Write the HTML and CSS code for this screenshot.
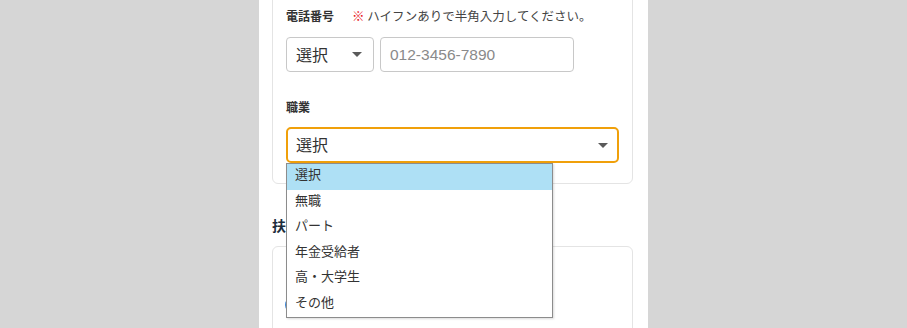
FILE: index.html
```html
<!DOCTYPE html>
<html lang="ja">
<head>
    <meta charset="UTF-8">
    <meta name="viewport" content="width=device-width, initial-scale=1.0">
    <title>お申し込みフォーム</title>
    <link rel="stylesheet" href="styles.css">
</head>
<body>
    <div class="panel">
        <div class="card">
            <div class="field-label">
                <span class="label-text">電話番号</span>
                <span class="note"><span class="mark">※</span> ハイフンありで半角入力してください。</span>
            </div>
            <div class="tel-row">
                <div class="select small">
                    <span>選択</span>
                    <span class="arrow"></span>
                </div>
                <div class="text-input">012-3456-7890</div>
            </div>

            <div class="field-label job-label">
                <span class="label-text">職業</span>
            </div>
            <div class="select-wrap">
                <div class="select wide active">
                    <span>選択</span>
                    <span class="arrow"></span>
                </div>
                <ul class="dropdown">
                    <li class="selected">選択</li>
                    <li>無職</li>
                    <li>パート</li>
                    <li>年金受給者</li>
                    <li>高・大学生</li>
                    <li>その他</li>
                </ul>
            </div>
        </div>

        <h2 class="section-title">扶養家族の有無</h2>
        <div class="card second">
            <div class="radio-row">
                <span class="radio"></span>
                <span>あり</span>
            </div>
        </div>
    </div>
</body>
</html>
```

FILE: styles.css
```css
body {
    margin: 0;
    padding: 0;
    background: #d6d6d6;
    font-family: "Noto Sans CJK JP", "Liberation Sans", sans-serif;
    color: #333;
    height: 328px;
    overflow: hidden;
}
.panel {
    width: 389px;
    height: 328px;
    margin: 0 auto;
    background: #fff;
    overflow: hidden;
}
.card {
    margin: -12px 15px 0 13px;
    border: 1px solid #e4e4e4;
    border-radius: 6px;
    padding: 20px 13px 20px 13px;
}
.field-label {
    display: flex;
    align-items: center;
    height: 14px;
    line-height: 14px;
}
.label-text {
    font-size: 12px;
    font-weight: bold;
    color: #333;
    width: 66px;
}
.note {
    font-size: 12.5px;
    color: #444;
}
.mark {
    color: #e8141c;
    font-weight: bold;
}
.tel-row {
    display: flex;
    gap: 6px;
    margin-top: 14px;
}
.select {
    box-sizing: border-box;
    display: flex;
    align-items: center;
    justify-content: space-between;
    border: 1px solid #c8c8c8;
    border-radius: 4px;
    background: #fff;
    font-size: 16px;
    color: #333;
    padding: 0 11px 2px 9px;
}
.select.small {
    width: 88px;
    height: 35px;
}
.arrow {
    width: 0;
    height: 0;
    margin-top: 2px;
    border-left: 5px solid transparent;
    border-right: 5px solid transparent;
    border-top: 5px solid #5a5a5a;
}
.text-input {
    box-sizing: border-box;
    width: 194px;
    height: 35px;
    border: 1px solid #c8c8c8;
    border-radius: 4px;
    font-family: "Liberation Sans", "Noto Sans CJK JP", sans-serif;
    font-size: 15.5px;
    color: #8a8a8a;
    padding: 0 9px;
    display: flex;
    align-items: center;
}
.job-label {
    margin-top: 28px;
}
.select-wrap {
    position: relative;
    margin-top: 13px;
}
.select.wide {
    width: 333px;
    height: 36px;
    padding: 0 9px 2px 8px;
}
.select.active {
    border: 2px solid #f0a00a;
    border-radius: 5px;
}
.dropdown {
    position: absolute;
    top: 100%;
    left: 0;
    width: 267px;
    margin: 0;
    padding: 0;
    list-style: none;
    box-sizing: border-box;
    border: 1px solid #8c8c8c;
    background: #fff;
    box-shadow: 1px 1px 2px rgba(0, 0, 0, 0.15);
    z-index: 10;
}
.dropdown li {
    height: 25.5px;
    line-height: 19.5px;
    box-sizing: border-box;
    font-size: 13px;
    padding: 0 0 6px 8px;
    color: #333;
}
.dropdown li.selected {
    background: #aee0f5;
}
.section-title {
    margin: 31px 0 11px 13px;
    font-size: 14px;
    line-height: 20px;
    font-weight: bold;
    color: #1d2d3c;
}
.card.second {
    margin-top: 0;
    height: 120px;
    padding: 48px 13px 0 12px;
}
.radio-row {
    display: flex;
    align-items: center;
    gap: 8px;
    font-size: 14px;
}
.radio {
    width: 14px;
    height: 14px;
    border: 2px solid #3a86d8;
    border-radius: 50%;
}
```
